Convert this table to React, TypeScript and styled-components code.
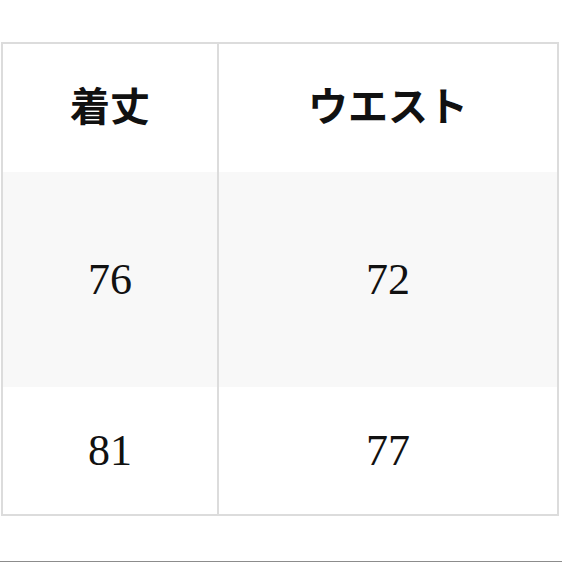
import styled, { createGlobalStyle } from 'styled-components';

const GlobalStyle = createGlobalStyle`
  html, body {
    margin: 0;
    padding: 0;
    background: #fff;
  }
`;

const sizeRows = [
  { length: '76', waist: '72', striped: true, tall: true },
  { length: '81', waist: '77', striped: false, tall: false },
];

function App() {
  return (
    <>
      <GlobalStyle />
      <Page>
        <SizeTable>
          <colgroup>
            <col style={{ width: 216 }} />
            <col style={{ width: 340 }} />
          </colgroup>
          <thead>
            <Row $height={129}>
              <HeadCell>着丈</HeadCell>
              <HeadCell>ウエスト</HeadCell>
            </Row>
          </thead>
          <tbody>
            {sizeRows.map((row) => (
              <Row
                key={row.length}
                $height={row.tall ? 215 : 128}
                $striped={row.striped}
              >
                <Cell>{row.length}</Cell>
                <Cell>{row.waist}</Cell>
              </Row>
            ))}
          </tbody>
        </SizeTable>
      </Page>
    </>
  );
}

const Page = styled.div`
  box-sizing: border-box;
  width: 562px;
  height: 562px;
  padding: 42px 0 0 1px;
  border-bottom: 1px solid #8c8c8c;
  overflow: hidden;
`;

const SizeTable = styled.table`
  width: 558px;
  table-layout: fixed;
  border-collapse: collapse;
  border: 2px solid #dcdcdc;
`;

const Row = styled.tr<{ $height: number; $striped?: boolean }>`
  height: ${(p) => p.$height}px;
  background: ${(p) => (p.$striped ? '#f8f8f8' : '#fff')};
`;

const HeadCell = styled.th`
  border-left: 2px solid #dcdcdc;
  border-right: 2px solid #dcdcdc;
  padding: 0 0 8px;
  text-align: center;
  vertical-align: middle;
  font-family: 'Noto Sans CJK JP', sans-serif;
  font-weight: 700;
  font-size: 40px;
  color: #111;
`;

const Cell = styled.td`
  border-left: 2px solid #dcdcdc;
  border-right: 2px solid #dcdcdc;
  padding: 0;
  text-align: center;
  vertical-align: middle;
  font-family: 'Liberation Serif', 'Times New Roman', serif;
  font-size: 44px;
  color: #111;
`;

export default App;
